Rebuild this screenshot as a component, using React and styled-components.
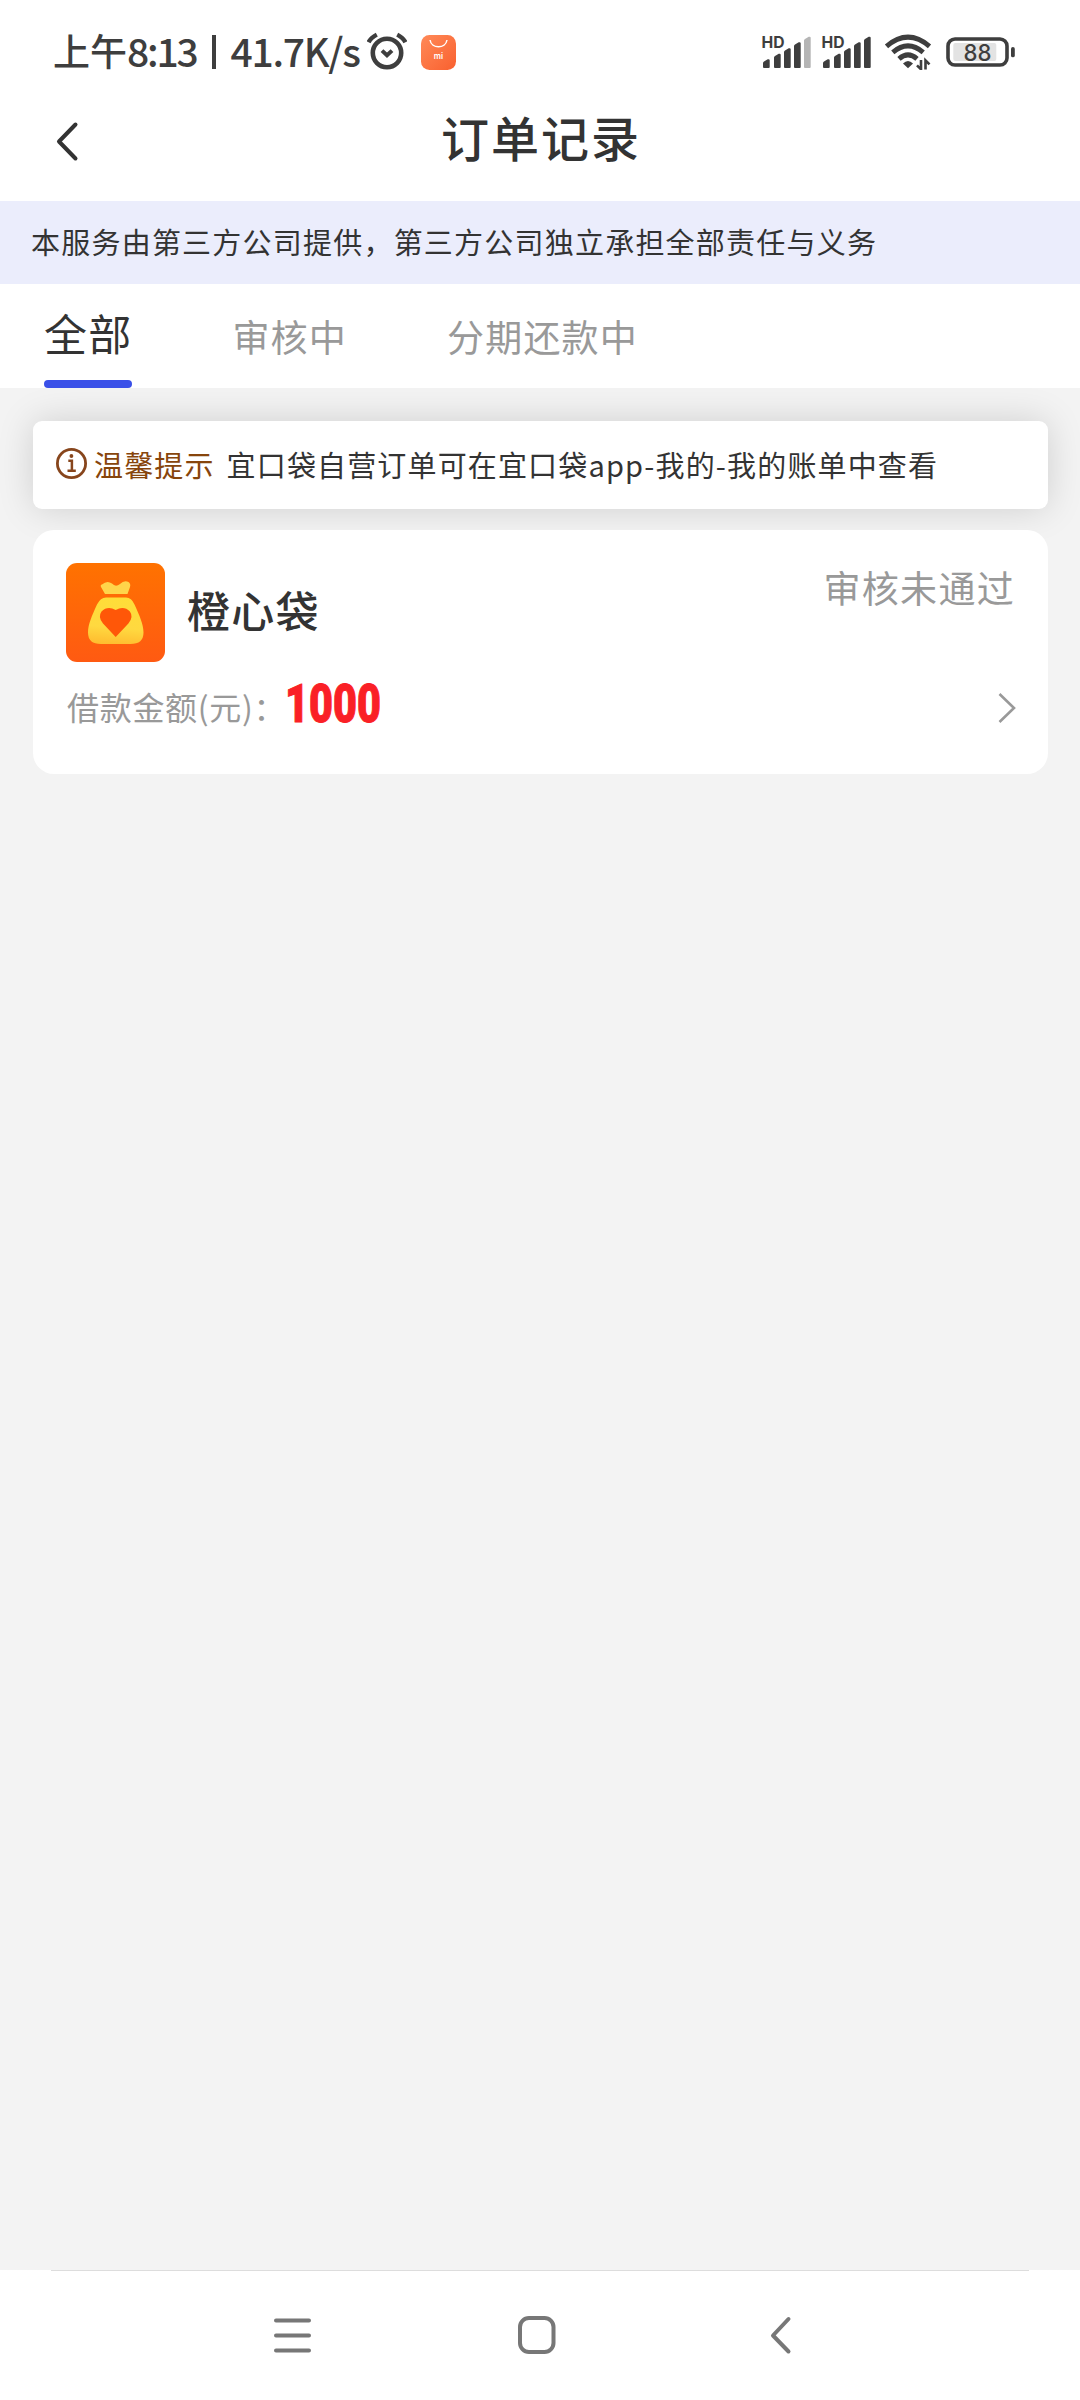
import React from 'react';
import styled, { createGlobalStyle } from 'styled-components';

const GlobalStyle = createGlobalStyle`
  * {
    box-sizing: border-box;
  }

  body {
    background: #ffffff;
    color: #333333;
    font-family: 'Noto Sans CJK SC', 'Noto Sans', sans-serif;
    margin: 0;
  }

  svg {
    display: block;
    flex: none;
  }
`;

const Screen = styled.div`
  display: flex;
  flex-direction: column;
  height: 2400px;
  overflow: hidden;
  width: 1080px;
`;

const StatusBar = styled.div`
  align-items: center;
  color: #3e3e3e;
  display: flex;
  height: 82px;
  justify-content: space-between;
  padding: 22px 64px 0 53px;
`;

const StatusGroup = styled.div`
  align-items: center;
  display: flex;
  gap: ${props => props.$gap || 0}px;
  height: 60px;
`;

const StatusText = styled.span`
  font-size: ${props => props.$size || 39}px;
  font-weight: 500;
  letter-spacing: ${props => props.$spacing || 0}px;
  line-height: 60px;
  margin-right: ${props => props.$gap || 0}px;
  padding-bottom: 4px;
  white-space: pre;
`;

const Divider = styled.span`
  background: #3e3e3e;
  height: 34px;
  margin-right: 15px;
  width: 4px;
`;

const Header = styled.header`
  align-items: center;
  display: grid;
  grid-template-columns: 100px 1fr 100px;
  height: 119px;
`;

const BackButton = styled.button`
  background: none;
  border: 0;
  padding: 0 0 0 55px;
`;

const Title = styled.h1`
  font-size: 48px;
  font-weight: 500;
  letter-spacing: 2px;
  line-height: 72px;
  margin: 0;
  padding: 0 0 11px 2px;
  text-align: center;
`;

const Banner = styled.div`
  background: #ebedfc;
  font-size: 29px;
  height: 83px;
  letter-spacing: 1.22px;
  line-height: 80px;
  padding-left: 31px;
`;

const Tabs = styled.nav`
  align-items: stretch;
  display: flex;
  gap: 100px;
  height: 104px;
  padding-left: 44px;
`;

const Tab = styled.div`
  color: ${props => (props.$active ? '#333333' : '#999999')};
  display: flex;
  flex-direction: column;
  font-size: ${props => (props.$active ? 43 : 37)}px;
  justify-content: space-between;
  letter-spacing: 1.2px;
  line-height: 60px;
  padding-top: ${props => (props.$active ? 18 : 22)}px;
`;

const TabLine = styled.div`
  background: #3a50e8;
  border-radius: 4px;
  height: 8px;
  width: 88px;
`;

const Content = styled.main`
  background: #f3f3f3;
  display: flex;
  flex: 1;
  flex-direction: column;
  gap: 21px;
  overflow: hidden;
  padding: 33px 32px 0 33px;
`;

const Notice = styled.section`
  align-items: center;
  background: #ffffff;
  border-radius: 9px;
  box-shadow: 0 0 36px rgba(0, 0, 0, 0.15);
  display: flex;
  font-size: 29px;
  height: 88px;
  letter-spacing: 1.15px;
  padding: 0 0 3px 22px;
`;

const NoticeLabel = styled.span`
  color: #87450c;
  margin: 0 12px 0 6px;
`;

const Card = styled.section`
  background: #ffffff;
  border-radius: 21px;
  display: flex;
  flex-direction: column;
  height: 244px;
  padding: 33px;
  position: relative;
`;

const CardTop = styled.div`
  display: flex;
`;

const Name = styled.h2`
  flex: 1;
  font-size: 43px;
  font-weight: 500;
  letter-spacing: 1.3px;
  line-height: 99px;
  margin: -3px 0 0 22px;
`;

const OrderStatus = styled.span`
  color: #999999;
  font-size: 37px;
  letter-spacing: 1.3px;
  line-height: 50px;
  margin-top: -1px;
`;

const CardBottom = styled.div`
  align-items: center;
  display: flex;
  height: 60px;
  margin: 15px -1px 0 0;
`;

const AmountLabel = styled.span`
  color: #999999;
  font-size: 32px;
  letter-spacing: 0.7px;
  line-height: 60px;
  padding: 0 0 3px 1px;
  white-space: nowrap;
  width: 219px;
`;

const Amount = styled.strong`
  -webkit-text-stroke: 1px #fa2026;
  color: #fa2026;
  flex: 1;
  font-family: Roboto, sans-serif;
  font-size: 53px;
  font-weight: 900;
  line-height: 56px;
  margin-top: -6px;
  transform: scaleX(0.78);
  transform-origin: left center;
`;

const NavBar = styled.footer`
  background: linear-gradient(#dddddd, #dddddd) 50% 0 / 978px 1px no-repeat #ffffff;
  display: flex;
  gap: 207px;
  height: 130px;
  padding: 45px 0 0 273px;
`;

const AlarmIcon = () => (
  <svg width="40" height="40" viewBox="0 0 40 40" fill="none" stroke="#3e3e3e" strokeWidth="4.6">
    <circle cx="20" cy="21" r="14.2" />
    <path d="M1.600 10.200Q4 5.500 9.800 2.600M38.400 10.200Q36 5.500 30.200 2.600" strokeWidth="4.4" />
    <path d="M15 18.600l5 4.600 5-4.600" strokeWidth="4" />
  </svg>
);

const StoreIcon = () => (
  <svg width="35" height="35" viewBox="0 0 35 35">
    <defs>
      <linearGradient id="store" x1="0" y1="0" x2="1" y2="1">
        <stop offset="0" stopColor="#ff8a58" />
        <stop offset="1" stopColor="#f9602f" />
      </linearGradient>
    </defs>
    <rect width="35" height="35" rx="8.500" fill="url(#store)" />
    <path d="M9 5c1.500 9 15.500 9 17 0" fill="none" stroke="#fff" strokeWidth="1.500" />
    <text x="17.500" y="23.500" textAnchor="middle" fill="#fff" fontFamily="Inter, sans-serif" fontSize="8" fontWeight="600">mi</text>
  </svg>
);

const bars = [
  [2, 8],
  [13, 13.500],
  [23, 19],
  [33, 25],
  [43, 30.500],
];

const SignalIcon = ({ weak }) => (
  <svg width="60" height="38" viewBox="0 0 60 38" fill="#3e3e3e">
    <text x="0.500" y="15" fontFamily="Inter, sans-serif" fontSize="16" fontWeight="700" textLength="23" lengthAdjust="spacingAndGlyphs">HD</text>
    {bars.map(([x, h], i) => (
      <path
        key={x}
        d={`M${x} 34v${-(h - 4)}q0-1 1-1.500l3.700-2.200q1.900-0.600 2 1v${h - 1.300}q0 1-1 1h-4.700q-1 0-1-1z`}
        fill={weak && i === 4 ? '#b5b5b5' : '#3e3e3e'}
      />
    ))}
  </svg>
);

const WifiIcon = () => (
  <svg width="48" height="36" viewBox="0 0 48 36" fill="none" stroke="#3e3e3e" strokeWidth="5">
    <path d="M2.500 12.300Q24-6 45.500 12.300" />
    <path d="M8.800 18.400Q24 5.500 39.200 18.400" />
    <path d="M15 24.800Q24 17 33 24.800" />
    <path d="M19 29.500q5-5 10 0l-5 4.800z" fill="#3e3e3e" stroke="none" />
    <path d="M37 26v9.300L33 31.300M41.500 35.500V26.300l4 4" strokeWidth="2.600" />
  </svg>
);

const BatteryIcon = () => (
  <svg width="70" height="32" viewBox="0 0 70 32">
    <rect x="2" y="3" width="59" height="26" rx="7" fill="#fff" stroke="#3e3e3e" strokeWidth="3.600" />
    <rect x="7.300" y="7" width="43" height="18" rx="2" fill="#e3e3e3" />
    <rect x="65" y="11" width="3.800" height="10.300" rx="1.900" fill="#3e3e3e" />
    <text x="31.500" y="24.700" textAnchor="middle" fill="#3e3e3e" fontFamily="Inter, sans-serif" fontSize="23" fontWeight="500" textLength="28" lengthAdjust="spacingAndGlyphs">88</text>
  </svg>
);

const InfoIcon = () => (
  <svg width="33" height="33" viewBox="0 0 33 33" fill="none" stroke="#87451c" strokeWidth="2.800">
    <circle cx="16.500" cy="16.500" r="14.100" />
    <path d="M13.300 13.800h3.600v9.600M12.500 23.700h8.300" strokeWidth="2.500" />
    <circle cx="16.400" cy="9" r="1.900" fill="#87451c" stroke="none" />
  </svg>
);

const MoneyBagLogo = () => (
  <svg width="99" height="99" viewBox="0 0 99 99">
    <defs>
      <linearGradient id="tile" x1="0" y1="0" x2="0" y2="1">
        <stop offset="0" stopColor="#ff7200" />
        <stop offset="1" stopColor="#ff5a12" />
      </linearGradient>
      <linearGradient id="bag" x1="0.600" y1="0" x2="0.500" y2="1">
        <stop offset="0" stopColor="#ffdd38" />
        <stop offset="0.650" stopColor="#ffd940" />
        <stop offset="1" stopColor="#ffbd30" />
      </linearGradient>
    </defs>
    <rect width="99" height="99" rx="11" fill="url(#tile)" />
    <path d="M39 31l-4-7q-1-2 1-2.500q5-4.500 10-1q3.500 4 8 .5q4-4 8.500-2q2.500 2 1.500 5L61.500 31z" fill="#ffd54a" />
    <path d="M40 34.500h20q5.500 0 8.500 7c5 11 9 20 9 28q0 11.500-13 11.500h-29.500q-13 0-13-11.500c0-8 4-17 9-28q3.500-7 9-7z" fill="url(#bag)" />
    <path d="M49.700 74L37 60.500Q31.500 54 35.500 48.500q6-6 14.200 -1.500q8.200-4.500 14.200 1.500q4 5.500-1.500 12z" fill="#ff5708" />
  </svg>
);

const tabs = ['全部', '审核中', '分期还款中'];

export default function App() {
  return (
    <>
      <GlobalStyle />
      <Screen>
        <StatusBar>
          <StatusGroup>
            <StatusText $size={37}>上午</StatusText>
            <StatusText $spacing={-2.2} $gap={15}>8:13</StatusText>
            <Divider />
            <StatusText $spacing={-1.3} $gap={7}>41.7K/s</StatusText>
            <StatusGroup $gap={14}>
              <AlarmIcon />
              <StoreIcon />
            </StatusGroup>
          </StatusGroup>
          <StatusGroup $gap={14}>
            <StatusGroup $gap={3}>
              <StatusGroup>
                <SignalIcon weak />
                <SignalIcon />
              </StatusGroup>
              <WifiIcon />
            </StatusGroup>
            <BatteryIcon />
          </StatusGroup>
        </StatusBar>
        <Header>
          <BackButton aria-label="返回">
            <svg width="24" height="42" viewBox="0 0 24 42" fill="none" stroke="#333" strokeWidth="4" strokeLinecap="round" strokeLinejoin="round">
              <path d="M20.500 3.500L4 20.500l16.500 17" />
            </svg>
          </BackButton>
          <Title>订单记录</Title>
        </Header>
        <Banner>本服务由第三方公司提供，第三方公司独立承担全部责任与义务</Banner>
        <Tabs>
          {tabs.map((tab, i) => (
            <Tab key={tab} $active={i === 0}>
              {tab}
              {i === 0 && <TabLine />}
            </Tab>
          ))}
        </Tabs>
        <Content>
          <Notice>
            <InfoIcon />
            <NoticeLabel>温馨提示</NoticeLabel>
            <span>宜口袋自营订单可在宜口袋app-我的-我的账单中查看</span>
          </Notice>
          <Card>
            <CardTop>
              <MoneyBagLogo />
              <Name>橙心袋</Name>
              <OrderStatus>审核未通过</OrderStatus>
            </CardTop>
            <CardBottom>
              <AmountLabel>借款金额(元)：</AmountLabel>
              <Amount>1000</Amount>
              <svg width="18" height="32" viewBox="0 0 18 32" fill="none" stroke="#999" strokeWidth="2.600">
                <path d="M1.500 3L16 17 1.500 31" />
              </svg>
            </CardBottom>
          </Card>
        </Content>
        <NavBar>
          <svg width="38" height="40" viewBox="0 0 38 40" stroke="#777" strokeWidth="4" strokeLinecap="round">
            <path d="M3 5.500h33M3 20.500h33M3 35.500h33" />
          </svg>
          <svg width="38" height="40" viewBox="0 0 38 40" fill="none" stroke="#777" strokeWidth="4">
            <rect x="2" y="3" width="33.500" height="34" rx="9" />
          </svg>
          <svg width="38" height="40" viewBox="0 0 38 40" fill="none" stroke="#777" strokeWidth="4" strokeLinecap="round" strokeLinejoin="round">
            <path d="M25.500 4L10 20.500l15.500 16" />
          </svg>
        </NavBar>
      </Screen>
    </>
  );
}
